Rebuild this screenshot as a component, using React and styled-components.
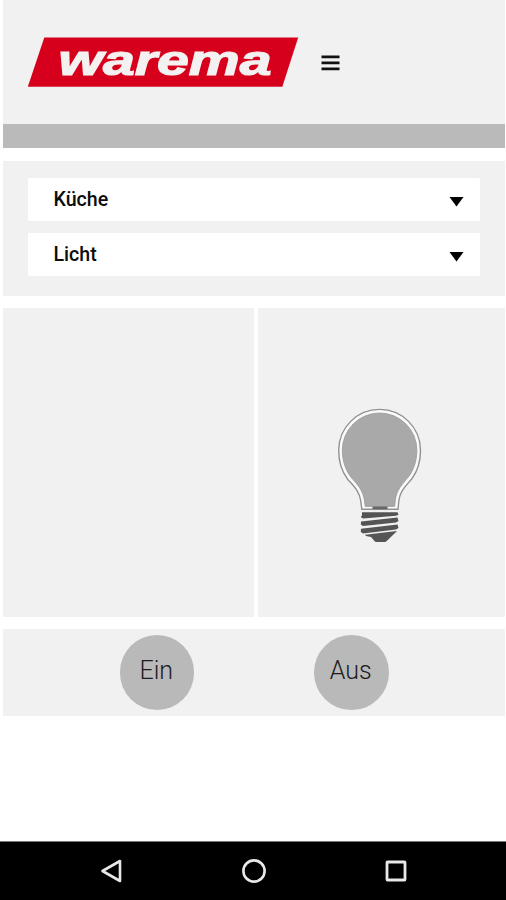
import { useState } from 'react'
import styled, { createGlobalStyle } from 'styled-components';


const GlobalStyle = createGlobalStyle`
*{
box-sizing:border-box;
}
body{
margin:0;
background:#fff;
font-family:Roboto, "Liberation Sans", sans-serif;
overflow:hidden;
}
`

const Screen = styled.div`
width:506px;
height:900px;
display:flex;
flex-direction:column;
`

const Content = styled.main`
flex:1;
padding:0 1px 0 3px;
`

const Header = styled.header`
height:123.5px;
padding:37px 0 0 24px;
display:flex;
align-items:flex-start;
gap:22px;
background:#f1f1f1;
`

const MenuButton = styled.button`
margin:18px 0 0;
padding:0;
border:none;
background:none;
line-height:0;
`

const TitleBar = styled.div`
height:24.5px;
background:#bababa;
`

const SelectPanel = styled.section`
height:135px;
margin-top:13px;
padding:17px 25px 0;
display:flex;
flex-direction:column;
gap:12px;
background:#f1f1f1;
`

const SelectBox = styled.button`
height:43px;
padding:0 16px 0 25.5px;
border:none;
border-radius:1px;
display:flex;
align-items:center;
justify-content:space-between;
background:#fff;
color:#0c0c0c;
font:500 19.6px Roboto, "Liberation Sans", sans-serif;

svg{
margin-top:5px;
}
`

const Panels = styled.section`
height:309px;
margin-top:12px;
display:grid;
grid-template-columns:250.5px 1fr;
gap:4.5px;
`

const Panel = styled.div`
padding:100px 0 0 80px;
background:#f1f1f1;
`

const Actions = styled.section`
height:87px;
margin-top:12px;
padding:6px 0 0 116.5px;
display:flex;
gap:120px;
background:#f1f1f1;
`

const RoundButton = styled.button`
width:74.5px;
height:74.5px;
padding:0 1px 4px 0;
border:none;
border-radius:50%;
background:#b9b9b9;
color:#1c1c1c;
font:300 25px Roboto, "Liberation Sans", sans-serif;
`

const NavBar = styled.nav`
height:59px;
padding:0 97px 0 99px;
border-top:1px solid #777;
display:flex;
align-items:center;
justify-content:space-between;
background:#000;
`

function Logo() {
  return (
    <svg width="272" height="50" viewBox="0 0 272 50">
      <path d="M17.3 .4H271.2L255.3 49.7H.8Z" fill="#d6001c" />
      <text
        x="31.5"
        y="38"
        textLength="213"
        lengthAdjust="spacingAndGlyphs"
        fontFamily="Liberation Sans, sans-serif"
        fontWeight="700"
        fontStyle="italic"
        fontSize="42"
        fill="#f4f1f1"
        stroke="#f4f1f1"
        strokeWidth="1.2"
      >
        warema
      </text>
    </svg>
  );
}

function Arrow() {
  return (
    <svg width="15" height="10" viewBox="0 0 15 10">
      <path d="M.5 0H14.5L7.5 9.5Z" fill="#000" />
    </svg>
  );
}

function Bulb() {
  return (
    <svg width="84" height="136" viewBox="0 0 84 136">
      <path
        d="M23.8 101.3L22.8 93C21.5 83 15.5 78 9.5 71C3.8 63.5 .7 52.5 .7 42.3A40.9 40.9 0 0 1 82.5 42.3C82.5 52.5 79.4 63.5 73.7 71C67.8 78 62 83 60.8 93L60 101.3Z"
        fill="#fafafa"
        stroke="#919191"
        strokeWidth="1.4"
      />
      <path
        d="M27.2 98.4L26.4 92.5C25 81.5 18.5 75.8 12.6 68.8C7.2 61.5 4.3 52 4.3 42.3A37.3 37.3 0 0 1 78.9 42.3C78.9 52 76 61.5 70.6 68.8C64.8 75.8 58.5 81.5 57.3 92.5L56.7 98.4Z"
        fill="#a9a9a9"
        stroke="#999"
        strokeWidth=".8"
      />
      <path d="M34.5 98.5H49.5V101.2H34.5Z" fill="#666" />
      <path
        d="M24 104.3H59.5L60.5 106.7L58 107.8L25 110.5L22.8 109L24 107.5ZM23 113.4L59.5 109.6L60.5 113L58 114.4L25 118L22.8 116.5ZM23 120.8L59.5 116.6L60.5 120L58 121.4L25 125.6L22.8 124ZM27 126.8L59 123L56 126L49 132.7Q48 134 46.5 134H38.5Q37 134 36 132.5L33 129L28 128Z"
        fill="#555"
      />
    </svg>
  );
}

function Select({ label }) {
  return (
    <SelectBox>
      {label}
      <Arrow />
    </SelectBox>
  )
}


export default function App() {
  const [lightOn, setLightOn] = useState(false);

  return (
    <>
      <GlobalStyle />
      <Screen>
        <Content>
          <Header>
            <Logo />
            <MenuButton>
              <svg width="19" height="16" viewBox="0 0 19 16">
                <path d="M.5 1.9H18.5M.5 7.9H18.5M.5 13.9H18.5" stroke="#111" strokeWidth="2.6" />
              </svg>
            </MenuButton>
          </Header>
          <TitleBar />
          <SelectPanel>
            <Select label="Küche" />
            <Select label="Licht" />
          </SelectPanel>
          <Panels>
            <Panel />
            <Panel>
              <Bulb />
            </Panel>
          </Panels>
          <Actions>
            <RoundButton aria-pressed={lightOn} onClick={() => setLightOn(true)}>Ein</RoundButton>
            <RoundButton aria-pressed={!lightOn} onClick={() => setLightOn(false)}>Aus</RoundButton>
          </Actions>
        </Content>
        <NavBar>
          <svg width="26" height="26" viewBox="0 0 26 26">
            <path d="M3.5 13L21 3V23Z" fill="none" stroke="#e8e8e8" strokeWidth="2.6" strokeLinejoin="round" />
          </svg>
          <svg width="26" height="26" viewBox="0 0 26 26">
            <circle cx="13" cy="13" r="10.6" fill="none" stroke="#e8e8e8" strokeWidth="2.6" />
          </svg>
          <svg width="26" height="26" viewBox="0 0 26 26">
            <rect x="4" y="4" width="18" height="18" rx=".5" fill="none" stroke="#e8e8e8" strokeWidth="2.8" />
          </svg>
        </NavBar>
      </Screen>
    </>
  );
}
